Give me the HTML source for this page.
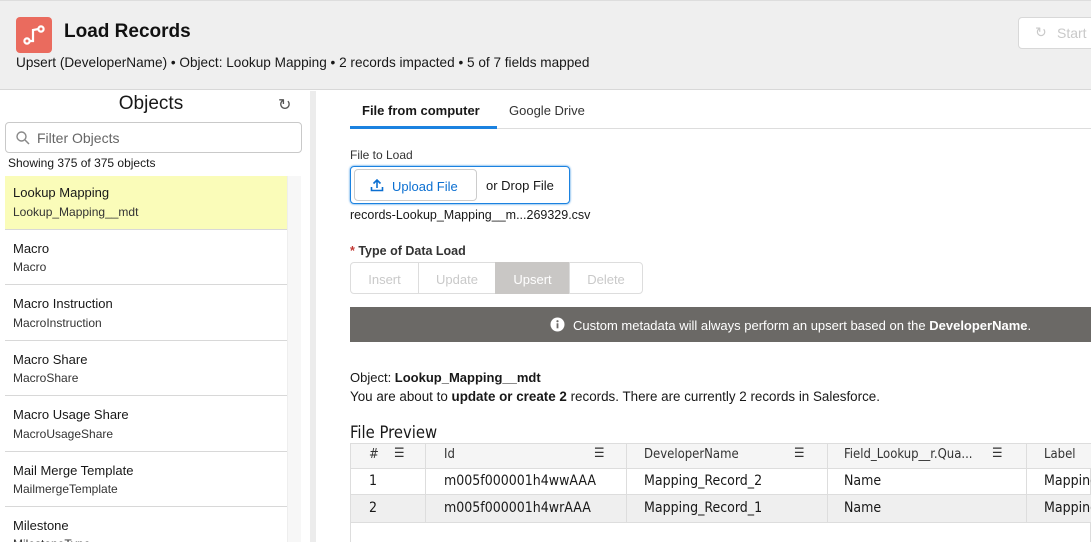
<!DOCTYPE html>
<html><head><meta charset="utf-8"><style>
*{box-sizing:border-box;margin:0;padding:0}
html,body{width:1091px;height:542px;overflow:hidden}
body{font-family:"Liberation Sans",sans-serif;color:#181818;background:#fff;position:relative;font-size:13px}
.abs{position:absolute}
#hdr{left:0;top:0;width:1091px;height:90px;background:#efefef;border-bottom:1px solid #d8d8d8;border-top:1px solid #ddd}
#logo{left:16px;top:17px;width:36px;height:36px;border-radius:4px;background:#ea6b5e}
#title{left:64px;top:21px;font-size:19px;font-weight:bold;color:#111}
#sub{left:16px;top:55px;font-size:13.6px}
#start{left:1018px;top:17px;width:90px;height:32px;border:1px solid #d8d8d8;border-radius:4px;background:#fff;color:#c9c9c9;font-size:14px;padding:7px 0 0 38px}
#left{left:0;top:91px;width:310px;height:451px;background:#fff}
.gapin{left:310px;top:91px;width:6px;height:451px;background:#ececec}
#objs{left:0;top:93px;width:302px;text-align:center;font-size:19px}
#filter{left:5px;top:122px;width:297px;height:31px;border:1px solid #c9c9c9;border-radius:4px;font-size:14px;color:#666;padding:7px 0 0 31px}
#showing{left:8px;top:156px;font-size:12px}
.track{left:287px;top:176px;width:14px;height:366px;background:#f7f7f7;border-left:1px solid #eee}
.item{position:absolute;left:5px;width:282px;border-bottom:1px solid #d8d8d8;padding-left:8px}
.item .a{font-size:13px;position:absolute;left:8px}
.item .b{font-size:12px;color:#333;position:absolute;left:8px}
.tab{font-size:13px}
.seg{position:absolute;top:262px;height:32px;border:1px solid #ddd;color:#c9c9c9;font-size:13px;text-align:center;padding-top:9px}
.th,.td{position:absolute;font-family:"DejaVu Sans Condensed","DejaVu Sans",sans-serif;font-size:14px}
.th{color:#333;font-size:13px}
</style></head><body>
<div id="hdr" class="abs"></div>
<div id="logo" class="abs"><svg width="36" height="36" viewBox="0 0 36 36"><g fill="none" stroke="#fff" stroke-width="2.2"><circle cx="11" cy="24" r="2.6"/><circle cx="25" cy="12" r="2.6"/><path d="M13.5 24 L17 24 L17 13 L22.5 12"/></g></svg></div>
<div id="title" class="abs">Load Records</div>
<div id="sub" class="abs">Upsert (DeveloperName) • Object: Lookup Mapping • 2 records impacted • 5 of 7 fields mapped</div>
<div id="start" class="abs"><span style="position:absolute;left:16px;top:6px;font-size:14px">↻</span>Start</div>

<div id="left" class="abs"></div>
<div class="abs gapin"></div>
<div id="objs" class="abs">Objects</div>
<div class="abs" style="left:278px;top:95px;font-size:16px;color:#555">↻</div>
<div id="filter" class="abs">Filter Objects</div>
<svg class="abs" style="left:15px;top:130px" width="16" height="16" viewBox="0 0 16 16"><circle cx="6.5" cy="6.5" r="4.5" fill="none" stroke="#888" stroke-width="1.4"/><path d="M10 10l4 4" stroke="#888" stroke-width="1.5"/></svg>
<div id="showing" class="abs">Showing 375 of 375 objects</div>
<div class="abs track"></div>
<div class="item" style="top:176px;height:54px;background:#fafcb9"><div class="a" style="top:9px">Lookup Mapping</div><div class="b" style="top:29px">Lookup_Mapping__mdt</div></div>
<div class="item" style="top:230px;height:55px"><div class="a" style="top:11px">Macro</div><div class="b" style="top:30px">Macro</div></div>
<div class="item" style="top:285px;height:56px"><div class="a" style="top:11px">Macro Instruction</div><div class="b" style="top:31px">MacroInstruction</div></div>
<div class="item" style="top:341px;height:55px"><div class="a" style="top:11px">Macro Share</div><div class="b" style="top:30px">MacroShare</div></div>
<div class="item" style="top:396px;height:56px"><div class="a" style="top:11px">Macro Usage Share</div><div class="b" style="top:31px">MacroUsageShare</div></div>
<div class="item" style="top:452px;height:55px"><div class="a" style="top:11px">Mail Merge Template</div><div class="b" style="top:30px">MailmergeTemplate</div></div>
<div class="item" style="top:507px;height:35px;border:none"><div class="a" style="top:11px">Milestone</div><div class="b" style="top:30px">MilestoneType</div></div>

<div class="abs tab" style="left:362px;top:103px;font-weight:bold">File from computer</div>
<div class="abs tab" style="left:509px;top:103px;color:#333">Google Drive</div>
<div class="abs" style="left:350px;top:128px;width:741px;height:1px;background:#ddd"></div>
<div class="abs" style="left:350px;top:126px;width:147px;height:3px;background:#1b82e0"></div>

<div class="abs" style="left:350px;top:148px;font-size:12px;color:#333">File to Load</div>
<div class="abs" style="left:350px;top:166px;width:220px;height:38px;border:1px solid #1b82e0;border-radius:4px;box-shadow:0 0 2px #1b82e0"></div>
<div class="abs" style="left:354px;top:169px;width:123px;height:32px;border:1px solid #ccc;border-radius:4px;background:#fff;color:#0b6fd1;font-size:13px;padding:9px 0 0 37px">Upload File</div>
<svg class="abs" style="left:370px;top:178px" width="14" height="14" viewBox="0 0 14 14"><path d="M7 10V2M3.5 5.5L7 2l3.5 3.5M1.5 9v3.5h11V9" fill="none" stroke="#0b6fd1" stroke-width="1.6"/></svg>
<div class="abs" style="left:486px;top:178px;font-size:13px">or Drop File</div>
<div class="abs" style="left:350px;top:208px;font-size:12.5px">records-Lookup_Mapping__m...269329.csv</div>
<div class="abs" style="left:350px;top:244px;font-size:12.5px;font-weight:bold;color:#333"><span style="color:#c23934">*</span> Type of Data Load</div>
<div class="seg" style="left:350px;width:69px;border-radius:4px 0 0 4px">Insert</div>
<div class="seg" style="left:418px;width:78px">Update</div>
<div class="seg" style="left:495px;width:75px;background:#c9c7c5;border-color:#c9c7c5;color:#fff">Upsert</div>
<div class="seg" style="left:569px;width:74px;border-radius:0 4px 4px 0">Delete</div>

<div class="abs" style="left:350px;top:307px;width:741px;height:35px;background:#6b6966"></div>
<svg class="abs" style="left:550px;top:317px" width="15" height="15" viewBox="0 0 15 15"><circle cx="7.5" cy="7.5" r="7" fill="#fff"/><rect x="6.6" y="6.3" width="1.8" height="5" fill="#6b6966"/><circle cx="7.5" cy="4.2" r="1.1" fill="#6b6966"/></svg>
<div class="abs" style="left:573px;top:318px;color:#fff;font-size:13px">Custom metadata will always perform an upsert based on the <b>DeveloperName</b>.</div>

<div class="abs" style="left:350px;top:370px;font-size:13px">Object: <b>Lookup_Mapping__mdt</b></div>
<div class="abs" style="left:350px;top:389px;font-size:13.4px">You are about to <b>update or create 2</b> records. There are currently 2 records in Salesforce.</div>
<div class="abs" style="left:350px;top:423px;font-size:16.5px;font-family:'DejaVu Sans Condensed','Liberation Sans Narrow',sans-serif">File Preview</div>

<div class="abs" style="left:350px;top:443px;width:741px;height:110px;border:1px solid #ddd"></div>
<div class="abs" style="left:351px;top:444px;width:740px;height:25px;background:#f5f5f5;border-bottom:1px solid #ddd"></div>
<div class="abs" style="left:351px;top:469px;width:740px;height:26px;border-bottom:1px solid #ddd"></div>
<div class="abs" style="left:351px;top:495px;width:740px;height:28px;background:#efefef;border-bottom:1px solid #ddd"></div>
<div class="abs" style="left:425px;top:444px;width:1px;height:79px;background:#ddd"></div>
<div class="abs" style="left:626px;top:444px;width:1px;height:79px;background:#ddd"></div>
<div class="abs" style="left:827px;top:444px;width:1px;height:79px;background:#ddd"></div>
<div class="abs" style="left:1026px;top:444px;width:1px;height:79px;background:#ddd"></div>
<div class="th" style="left:369px;top:447px">#</div><div class="th" style="left:394px;top:446px">☰</div>
<div class="th" style="left:444px;top:447px">Id</div><div class="th" style="left:594px;top:446px">☰</div>
<div class="th" style="left:644px;top:447px">DeveloperName</div><div class="th" style="left:794px;top:446px">☰</div>
<div class="th" style="left:844px;top:447px">Field_Lookup__r.Qua...</div><div class="th" style="left:992px;top:446px">☰</div>
<div class="th" style="left:1044px;top:447px">Label</div>
<div class="td" style="left:369px;top:473px">1</div><div class="td" style="left:444px;top:473px">m005f000001h4wwAAA</div><div class="td" style="left:644px;top:473px">Mapping_Record_2</div><div class="td" style="left:844px;top:473px">Name</div><div class="td" style="left:1044px;top:473px">Mapping</div>
<div class="td" style="left:369px;top:500px">2</div><div class="td" style="left:444px;top:500px">m005f000001h4wrAAA</div><div class="td" style="left:644px;top:500px">Mapping_Record_1</div><div class="td" style="left:844px;top:500px">Name</div><div class="td" style="left:1044px;top:500px">Mapping</div>
</body></html>
